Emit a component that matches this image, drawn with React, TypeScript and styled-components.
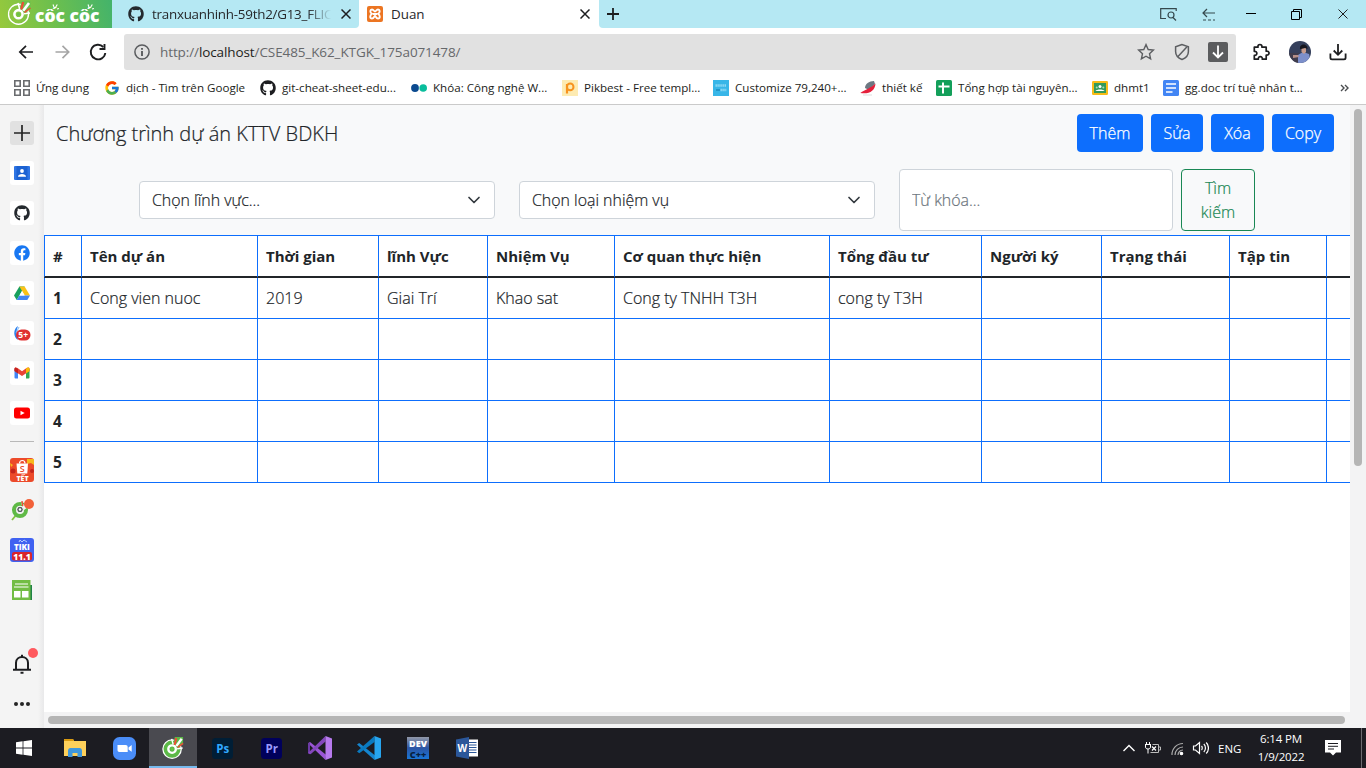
import React from "react";
import styled, { createGlobalStyle } from "styled-components";
import { FaGithub, FaFacebook } from "react-icons/fa";
import { FcGoogle } from "react-icons/fc";

const ui = `"Open Sans", "Noto Sans", sans-serif`;

const Global = createGlobalStyle`
  * { box-sizing: border-box; }
  html, body { margin: 0; overflow: hidden; }
  body { font-family: ${ui}; color: #212529; }
  svg { display: block; flex: none; }
  button, input { font-family: inherit; }
`;

const Screen = styled.div`
  width: 1366px;
  height: 768px;
  display: flex;
  flex-direction: column;
  overflow: hidden;
  background: #fff;
`;

/* ---------- tab strip ---------- */
const TabStrip = styled.div`
  flex: none;
  height: 28px;
  display: flex;
  background: #fff;
`;
const Brand = styled.div`
  width: 112px;
  background: linear-gradient(75deg, #97c93c 0%, #6cbf4e 50%, #43b36b 100%);
`;
const Tab = styled.div<{ $active?: boolean; $width: number }>`
  width: ${(p) => p.$width}px;
  display: flex;
  align-items: center;
  padding: 0 ${(p) => (p.$active ? 9 : 8)}px 0 ${(p) => (p.$active ? 8 : 16)}px;
  gap: 8px;
  background: ${(p) => (p.$active ? "#fff" : "#b5e8f3")};
  border-bottom-right-radius: ${(p) => (p.$active ? 0 : 4)}px;
`;
const TabTitle = styled.span<{ $fade?: boolean }>`
  flex: 1;
  min-width: 0;
  white-space: nowrap;
  font-size: 13.4px;
  line-height: 20px;
  color: #26282b;
  letter-spacing: ${(p) => (p.$fade ? -0.25 : 0)}px;
  mask-image: ${(p) => (p.$fade ? "linear-gradient(90deg, #000 86%, transparent 99%)" : "none")};
`;
const StripRest = styled.div`
  flex: 1;
  display: flex;
  align-items: center;
  padding: 0 18px 0 8px;
  background: #b5e8f3;
  border-bottom-left-radius: 4px;
`;
const WindowTools = styled.div`
  margin-left: auto;
  display: flex;
  align-items: center;
`;
const ToolSlot = styled.div<{ $width: number }>`
  width: ${(p) => p.$width}px;
  display: flex;
  justify-content: flex-end;
`;

/* ---------- toolbar ---------- */
const Toolbar = styled.div`
  flex: none;
  height: 48px;
  display: flex;
  align-items: center;
  padding: 0 0 0 16px;
`;
const NavButtons = styled.div`
  flex: none;
  width: 108px;
  display: flex;
  gap: 16px;
`;
const AddressBar = styled.div`
  flex: none;
  width: 1112px;
  height: 36px;
  display: flex;
  align-items: center;
  padding: 0 8px 0 10px;
  background: #e1e1e1;
  border-radius: 3px;
`;
const Url = styled.span`
  margin-left: 10px;
  flex: 1;
  font-size: 13.5px;
  letter-spacing: -0.1px;
  color: #66686b;
  b { font-weight: 400; color: #1d1e20; }
`;
const BarIcons = styled.div`
  display: flex;
  align-items: center;
  gap: 17.500px;
`;
const ToolbarEnd = styled.div`
  display: flex;
  align-items: center;
  gap: 17px;
  margin-left: 16px;
`;

/* ---------- bookmarks ---------- */
const Bookmarks = styled.div`
  flex: none;
  height: 29px;
  display: flex;
  align-items: center;
  padding: 0 0 5px 14px;
  border-bottom: 1px solid #cacaca;
`;
const Bookmark = styled.div<{ $width: number }>`
  width: ${(p) => p.$width}px;
  flex: none;
  display: flex;
  align-items: center;
  gap: 6px;
  font-size: 11.6px;
  line-height: 18px;
  white-space: nowrap;
  color: #1c1d20;
`;

/* ---------- body ---------- */
const Body = styled.div`
  flex: none;
  height: 623px;
  display: flex;
`;
const Sidebar = styled.div`
  width: 44px;
  flex: none;
  display: flex;
  flex-direction: column;
  align-items: center;
  padding-top: 16px;
  background: linear-gradient(90deg, #f4f4f4 0 38px, #e9e9ea 44px);
`;
const SideTile = styled.div<{ $bg?: string }>`
  position: relative;
  width: 24px;
  height: 24px;
  margin-bottom: 16px;
  flex: none;
  display: flex;
  align-items: center;
  justify-content: center;
  border-radius: 3px;
  background: ${(p) => p.$bg ?? "#fff"};
`;
const SideRule = styled.div`
  width: 24px;
  height: 1px;
  flex: none;
  margin-bottom: 16px;
  background: #b8b8b8;
`;
const SideFoot = styled.div`
  flex: 1;
  display: flex;
  flex-direction: column;
  align-items: center;
  padding-top: 34px;
`;
const Dot = styled.i<{ $color: string; $right: number; $top: number }>`
  position: absolute;
  width: 10px;
  height: 10px;
  top: ${(p) => p.$top}px;
  right: ${(p) => p.$right}px;
  border-radius: 50%;
  background: ${(p) => p.$color};
`;

const Viewport = styled.div`
  width: 1306px;
  flex: none;
  height: 607px;
  overflow: hidden;
  background: #fff;
  font-weight: 300;
  -webkit-text-stroke: 0.22px currentColor;
`;
const PageArea = styled.div`
  flex: 1;
  display: flex;
  flex-direction: column;
  background: #f3f3f4;
`;
const PageRow = styled.div`
  display: flex;
`;
const VTrack = styled.div`
  flex: 1;
  padding: 4px 0 0 4px;
`;
const VThumb = styled.div`
  width: 8px;
  height: 357px;
  border-radius: 4px;
  background: #b5b5b5;
`;
const HTrack = styled.div`
  height: 16px;
  padding: 4px;
`;
const HThumb = styled.div`
  width: 1297px;
  height: 8px;
  border-radius: 4px;
  background: #b5b5b5;
`;

const NavBar = styled.div`
  height: 58px;
  display: flex;
  align-items: center;
  padding: 0 16px 2px 12px;
  background: #f8f9fa;
`;
const Title = styled.h1`
  margin: 0;
  padding-top: 2px;
  flex: 1;
  font-size: 20px;
  font-weight: 300;
  line-height: 30px;
`;
const Actions = styled.div`
  display: flex;
  gap: 8px;
`;
const Primary = styled.button<{ $width: number }>`
  width: ${(p) => p.$width}px;
  height: 38px;
  padding: 0;
  border: 0;
  border-radius: 4px;
  background: #0d6efd;
  color: #fff;
  font-size: 16px;
  font-weight: 300;
  -webkit-text-stroke: 0.25px currentColor;
`;
const SearchBar = styled.form`
  height: 72px;
  display: flex;
  align-items: center;
  padding: 4px 0 2px 95px;
  background: #f8f9fa;
`;
const Select = styled.div`
  width: 356px;
  height: 38px;
  margin-right: 24px;
  padding: 0 12px;
  display: flex;
  align-items: center;
  justify-content: space-between;
  border: 1px solid #ced4da;
  border-radius: 4px;
  background: #fff;
  font-size: 15.9px;
`;
const Keyword = styled.input`
  width: 274px;
  height: 62px;
  margin-right: 8px;
  padding: 0 12px;
  border: 1px solid #ced4da;
  border-radius: 4px;
  font-size: 15.9px;
  font-weight: 300;
  -webkit-text-stroke: 0.22px currentColor;
  &::placeholder { color: #6c757d; opacity: 1; }
`;
const SearchButton = styled.button`
  width: 74px;
  height: 62px;
  padding: 0 12px;
  border: 1px solid #198754;
  border-radius: 4px;
  background: transparent;
  color: #198754;
  font-size: 16px;
  font-weight: 300;
  -webkit-text-stroke: 0.22px currentColor;
  line-height: 24px;
`;

const Table = styled.table`
  width: 1406px;
  table-layout: fixed;
  border-collapse: separate;
  border-spacing: 0;
  border-top: 1px solid #0d6efd;
  font-size: 16px;
  line-height: 24px;
`;
const Cell = styled.td`
  height: 41px;
  padding: 0 8px;
  border-left: 1px solid #0d6efd;
  border-bottom: 1px solid #0d6efd;
  text-align: left;
  font-weight: 300;
  white-space: nowrap;
`;
const HeadCell = styled(Cell)`
  height: 42px;
  border-bottom: 2px solid #212529;
  font-weight: 700;
  font-size: 15px;
  -webkit-text-stroke: 0;
`;
const IndexCell = styled(Cell)`
  font-weight: 700;
  font-size: 15.6px;
  -webkit-text-stroke: 0;
`;

/* ---------- taskbar ---------- */
const Taskbar = styled.div`
  flex: none;
  height: 40px;
  display: flex;
  background: #1c1c22;
  color: #fff;
`;
const TaskItem = styled.div<{ $active?: boolean; $start?: boolean }>`
  width: 48px;
  margin-right: ${(p) => (p.$start ? 3 : 1)}px;
  display: flex;
  align-items: center;
  justify-content: center;
  background: ${(p) => (p.$active ? "#4a4a50" : "transparent")};
  box-shadow: ${(p) => (p.$active ? "inset 0 -2px #76b9ed" : "none")};
`;
const Tray = styled.div`
  margin-left: auto;
  display: flex;
  align-items: center;
  font-size: 11.5px;
`;
const Lang = styled.span`
  width: 40px;
  margin-left: 9px;
`;
const Clock = styled.div`
  width: 46px;
  margin-right: 21px;
  line-height: 18px;
  white-space: nowrap;
  display: flex;
  flex-direction: column;
  align-items: center;
  letter-spacing: -0.15px;
`;
const Peek = styled.div`
  width: 5px;
  height: 40px;
  margin-left: 20px;
  border-left: 1px solid #6b6b70;
`;

/* ---------- drawings ---------- */
const CocMark = ({ size, white }: { size: number; white?: boolean }) => (
  <svg width={size} height={size} viewBox="0 0 24 24" fill="none">
    <circle cx="11" cy="13.2" r="10" fill={white ? "none" : "#5cb947"} stroke="#fff" strokeWidth="1.4" />
    <path d="M12 9 14 0h9v8l-8 4z" fill={white ? "#6cbf4e" : "#5cb947"} />
    <circle cx="11" cy="13.2" r="4.1" stroke="#fff" strokeWidth="2.6" />
    <circle cx="11" cy="13.2" r="1.5" fill="#6abf4a" />
    <path d="m10.500 2 1.700 6M22.500 12l-6 .8" stroke="#fff" strokeWidth="1.6" />
    <path d="m15.600 1-1.800 7.600" stroke="#ef4d36" strokeWidth="2.2" />
    <path d="m21.500 2-5.800 7.800" stroke="#fff" strokeWidth="2.6" />
    <path d="m23 7-6 4.300" stroke="#ef4d36" strokeWidth="1.5" />
  </svg>
);

const BrandArt = () => (
  <svg width="112" height="28" viewBox="0 0 112 28" fill="none">
    <g transform="translate(7.500 1)"><CocMark size={24} white /></g>
    <text x="35" y="21.500" fontSize="18" fontWeight="800" fill="#fff" textLength="64.500" lengthAdjust="spacingAndGlyphs">cốc cốc</text>
    <path d="m53 4.500 1 2.500M57.300 4.500 55.500 7.500M59 8.500l-2 .5M88 4.500l1 2.500M92.300 4.500 90.500 7.500M94 8.500l-2 .5" stroke="#fff" strokeWidth="1.100" />
  </svg>
);

const Cross = ({ s = 10, w = 1.5 }: { s?: number; w?: number }) => (
  <svg width={s} height={s} viewBox="0 0 10 10" stroke="#1d1e20" strokeWidth={w}><path d="m.5.5 9 9m0-9-9 9" /></svg>
);

const Xampp = () => (
  <svg width="16" height="16" viewBox="0 0 16 16">
    <rect width="16" height="16" rx="2" fill="#ec7522" />
    <path d="M5 3.500c-2 0-2.500 3 0 4.300-2.500 1.500-2.200 4.700 0 4.700 2 0 2.300-2.600 3-2.600s1 2.600 3 2.600c2.200 0 2.500-3.200 0-4.700 2.500-1.300 2-4.300 0-4.300-1.800 0-2 2-3 2s-1.200-2-3-2zM6 8h4" fill="none" stroke="#fff" strokeWidth="1.9" />
  </svg>
);

const stroke = { fill: "none", stroke: "#1d1e20", strokeWidth: 1.7 } as const;

const Back = ({ dim }: { dim?: boolean }) => (
  <svg width="20" height="20" viewBox="0 0 20 20" {...stroke} stroke={dim ? "#a5a5a5" : "#1d1e20"}>
    {dim ? <path d="M3.500 10H17M10.500 3.800 16.700 10l-6.200 6.200" /> : <path d="M17 10H4M10 3.800 3.800 10l6.200 6.200" />}
  </svg>
);
const Reload = () => (
  <svg width="20" height="20" viewBox="0 0 20 20" {...stroke} strokeWidth="1.9">
    <path d="M15.300 5A7.300 7.300 0 1 0 17.300 11" /><path d="M16.500 2v5h-5" />
  </svg>
);
const Info = () => (
  <svg width="16" height="16" viewBox="0 0 16 16" fill="none" stroke="#5a5c5f" strokeWidth="1.5">
    <circle cx="8" cy="8" r="7.100" /><path d="M8 7v5M8 4v1.800" strokeWidth="1.900" />
  </svg>
);
const Star = () => (
  <svg width="18" height="18" viewBox="0 0 18 18" fill="none" stroke="#5d5f62" strokeWidth="1.400">
    <path d="m9 1.600 2.200 4.900 5.200.6-3.900 3.600 1.100 5.200L9 13.200l-4.600 2.700 1.100-5.200L1.600 7.100l5.200-.6z" />
  </svg>
);
const Shield = () => (
  <svg width="18" height="18" viewBox="0 0 18 18" fill="none" stroke="#5d5f62" strokeWidth="1.500">
    <path d="M9 1.500 2.600 3.700v4.800c0 3.800 2.900 6.700 6.400 8 3.500-1.300 6.400-4.200 6.400-8V3.700zM13.800 4 5 13.500" />
  </svg>
);
const SaveBox = () => (
  <svg width="20" height="20" viewBox="0 0 20 20"><rect width="20" height="20" rx="2" fill="#5b5c5e" /><path d="M10 3.500v12M5 10.500l5 5 5-5" fill="none" stroke="#fff" strokeWidth="1.800" /></svg>
);
const Puzzle = () => (
  <svg width="20" height="20" viewBox="0 0 20 20" {...stroke} strokeLinejoin="round">
    <path d="M2.300 5.200H6c-.8-3.600 4.600-3.600 3.900 0h4.300v4c3.800-.8 3.800 4.500 0 3.900v4.100h-3.900c.6-3.500-4.600-3.500-3.900 0H2.300v-3.800c3.400.4 3.400-4.600 0-4z" />
  </svg>
);
const Avatar = () => (
  <svg width="22" height="22" viewBox="0 0 22 22">
    <defs><clipPath id="av"><circle cx="11" cy="11" r="11" /></clipPath></defs>
    <g clipPath="url(#av)">
      <rect width="22" height="22" fill="#35405c" /><path d="M0 12h10v10H0z" fill="#3f3c4c" />
      <path d="m9 14 5-3 6 2 2 9H9z" fill="#7c8fcb" /><path d="M12.500 7h4.500v4l-2 2-2.500-2z" fill="#c79b8c" />
      <path d="M11 8c-1-6 8-6 7.500 0l-2.500-1-4 1z" fill="#17171f" /><path d="M4 14h5l1 2-6 1z" fill="#b69089" />
    </g>
  </svg>
);
const Download = () => (
  <svg width="20" height="20" viewBox="0 0 20 20" {...stroke} strokeWidth="1.800">
    <path d="M10 2v10.500M5.700 8.500l4.300 4.300 4.300-4.300M2.400 11.500v4.200c0 1 .6 1.600 1.600 1.600h12c1 0 1.600-.6 1.600-1.600v-4.200" />
  </svg>
);

const Svg16 = ({ children }: { children: React.ReactNode }) => (
  <svg width="16" height="16" viewBox="0 0 16 16">{children}</svg>
);
const GridIcon = () => <Svg16><path d="M.8.800h5.400v5.400H.8zM9.800.8h5.400v5.400H9.800zM.8 9.800h5.400v5.400H.8zM9.800 9.800h5.400v5.400H9.800z" fill="none" stroke="#6a6c6f" strokeWidth="1.600" /></Svg16>;
const DotsPair = () => <Svg16><circle cx="4" cy="8" r="3.900" fill="#0b4a8f" /><circle cx="12.200" cy="8" r="3.800" fill="#09bd9c" /></Svg16>;
const Pik = () => <Svg16><rect width="16" height="16" fill="#fdebb2" /><path d="M5 13.500V4" stroke="#f7931e" strokeWidth="2.200" /><circle cx="8.200" cy="6.900" r="3.300" fill="none" stroke="#f7931e" strokeWidth="2" /></Svg16>;
const Poster = () => <Svg16><rect width="16" height="16" fill="#38b6e8" /><path d="M2.500 5.500h10.500" stroke="#8fd9f3" strokeWidth="2.400" strokeDasharray="1.400 .5" /><path d="M7.500 10h6" stroke="#8fd9f3" strokeWidth="2.400" strokeDasharray="1.400 .5" /><path d="M3 10h4" stroke="#2196c9" strokeWidth="2" /></Svg16>;
const Wing = () => <Svg16><path d="M5 8c0-4 4-7 9-7l1 3-6 6z" fill="#6d7883" /><path d="M.3 13C5 9.500 11 8 15.500 3.500 15 11 9 14.500.3 13z" fill="#e5203b" /><path d="M3 15h9" stroke="#ddd" /></Svg16>;
const Sheets = () => <Svg16><rect width="16" height="16" rx="1.500" fill="#139f5a" /><path d="M2.500 6.500h11M7 2.500v11" stroke="#fff" strokeWidth="2" /></Svg16>;
const Classroom = () => <Svg16><rect y="1" width="16" height="14" rx="1.200" fill="#f7bb16" /><rect x="2" y="3" width="12" height="10" fill="#33995a" /><circle cx="8" cy="6.500" r="1.500" fill="#fff" /><circle cx="4.700" cy="7.500" r="1" fill="#a9d8b8" /><circle cx="11.300" cy="7.500" r="1" fill="#a9d8b8" /><path d="M3.500 11c1-2 8-2 9 0z" fill="#fff" /></Svg16>;
const Docs = () => <Svg16><rect width="16" height="16" rx="1.500" fill="#4285f4" /><path d="M3 4h10M3 8h10M3 12h6.500" stroke="#fff" strokeWidth="1.700" /></Svg16>;

const Contact = () => <Svg16><rect y="1" width="16" height="14" rx="1" fill="#2f75e4" /><rect x="2.500" y="1" width="11" height="14" fill="#1c62d2" /><circle cx="8" cy="6" r="1.900" fill="#fff" /><path d="M4 11.700c0-3.600 8-3.600 8 0z" fill="#fff" /></Svg16>;
const Drive = () => <Svg16><path d="M5.400 1.500h5.200L5.300 10.700 2.700 15 0 10.600z" fill="#18a05e" /><path d="M5.400 1.500h5.200l5.400 9.100h-5.200z" fill="#fbc116" /><path d="M5.300 10.600H16L13.300 15H2.700z" fill="#4285f4" /><path d="M8 6.100 5.400 10.600h5.200z" fill="#fff" /></Svg16>;
const Gmail = () => <Svg16><path d="M.5 3.500 4 6v7.500H1.500a1 1 0 0 1-1-1z" fill="#4285f4" /><path d="M15.500 3.500 12 6v7.500h2.500a1 1 0 0 0 1-1z" fill="#34a853" /><path d="M.5 6V4c0-2 2-1.800 3-1L8 6.200 12.500 3c1-.8 3-1 3 1v2L8 11z" fill="#ea4335" /><path d="M12.500 3c1-.8 3-1 3 1v2L12 8.400V3.400z" fill="#fbbc04" /><path d="M.5 6V4c0-1 .4-1.500 1.200-1.600L4 4v4.400z" fill="#c5221f" /></Svg16>;
const Youtube = () => <Svg16><rect y="2.500" width="16" height="11" rx="2.500" fill="#f00" /><path d="m6.500 5.700 4.200 2.300-4.200 2.300z" fill="#fff" /></Svg16>;
const CBadge = () => (
  <svg width="18" height="18" viewBox="0 0 18 18">
    <path d="M5 2C0 5 0 13 5 16c-2-5-2-9 0-14z" fill="#2d82ee" />
    <path d="M6 3 3 9" stroke="#87b9f4" />
    <rect x="3" y="5.500" width="14.500" height="11" rx="5.500" fill="#df3030" />
    <text x="10.200" y="14" textAnchor="middle" fontSize="8.500" fontWeight="700" fill="#fff">5+</text>
  </svg>
);
const Shopee = () => (
  <svg width="24" height="24" viewBox="0 0 24 24">
    <rect width="24" height="24" rx="3" fill="#ec4a2a" />
    <path d="M17 1h7v6l-3-2-4 1zM0 5l3 2-2 2z" fill="#f7b91c" /><circle cx="3" cy="13" r="2.500" fill="#c3241c" /><circle cx="22" cy="13" r="2" fill="#c3241c" />
    <path d="M6.500 5.500h11.500l-.7 10h-10z" fill="#fff" /><path d="M9.500 5.500c0-4 5.500-4 5.500 0" fill="none" stroke="#fff" strokeWidth="1.200" />
    <text x="12.300" y="13.800" textAnchor="middle" fontSize="9" fontWeight="600" fill="#ec4a2a">S</text>
    <text x="12.500" y="22.600" textAnchor="middle" fontSize="7" fontWeight="800" fill="#fff">TẾT</text>
  </svg>
);
const CocSearch = () => (
  <svg width="24" height="24" viewBox="0 0 24 24" fill="none">
    <path d="m2 22 5-6" stroke="#82c341" strokeWidth="1.800" />
    <circle cx="10" cy="12" r="6" stroke="#5fb946" strokeWidth="4" />
    <path d="m11 5 7 4-4 3z" fill="#f3f3f3" /><circle cx="10" cy="11.500" r="3.300" fill="#5b5f63" stroke="#fff" /><circle cx="10" cy="11.500" r="1.200" fill="#fff" />
    <path d="m12 3 .7 5" stroke="#ef4d36" strokeWidth="1.400" />
  </svg>
);
const Tiki = () => (
  <svg width="24" height="24" viewBox="0 0 24 24">
    <rect width="24" height="24" rx="3" fill="#4062f1" />
    <path d="m9 4 1-2 2 2 2-2 3 2" stroke="#b4cbff" fill="none" />
    <text x="12" y="12.300" textAnchor="middle" fontSize="8" fontWeight="800" fill="#fff">TIKI</text>
    <rect x="2" y="14" width="20" height="8.500" rx="2" fill="#d8232b" />
    <text x="12" y="21.700" textAnchor="middle" fontSize="8.500" fontWeight="800" fill="#fff">11.1</text>
  </svg>
);
const News = () => (
  <svg width="24" height="24" viewBox="0 0 24 24"><path d="M19 7h3v15H6z" fill="#218348" /><rect x="2" y="2" width="18.500" height="20" fill="#72bd44" /><path d="M5 6h13M4 9h14.500" stroke="#fff" strokeWidth="1.200" /><path d="M4 13h6.500v6.500H4zM12 13h6.500v6.500H12z" fill="#fff" /></svg>
);
const Bell = () => (
  <svg width="20" height="20" viewBox="0 0 20 20" {...stroke} strokeWidth="2">
    <path d="M1 15.800h18M4 15.500V8.800C4 1.200 16 1.200 16 8.800v6.700M8.500 18.700h3M10 .8V3" />
  </svg>
);

/* taskbar drawings */
const WinLogo = () => <svg width="16" height="16" viewBox="0 0 16 16" fill="#fff"><path d="m0 2.200 6.600-.9v6.200H0zM7.400 1.200 16 0v7.500H7.400zM0 8.400h6.600v6.300L0 13.800zM7.400 8.400H16V16l-8.600-1.200z" /></svg>;
const Explorer = () => <svg width="22" height="20" viewBox="0 0 22 20"><path d="M0 1h9l1 2h12v15H0z" fill="#fdd05b" /><path d="M0 1h9l1 2H0z" fill="#d99a11" /><path d="M4 19v-6c0-2 1-3 2.500-3h9c1.500 0 2.500 1 2.500 3v6h-4.500v-4h-5v4z" fill="#3f97dc" /></svg>;
const ZoomApp = () => <svg width="23" height="23" viewBox="0 0 23 23"><rect width="23" height="23" rx="6.500" fill="#4a8df8" /><path d="M4.500 8h8c1.500 0 2.200.8 2.200 2.200V15H6.500c-1.300 0-2-.8-2-2zM15.500 10.500l3.200-2.400v6.700l-3.200-2.300z" fill="#fff" /></svg>;
const Adobe = ({ bg, fg, t }: { bg: string; fg: string; t: string }) => <svg width="21" height="21" viewBox="0 0 21 21"><rect width="21" height="21" rx="3.500" fill={bg} /><text x="10.700" y="14.800" textAnchor="middle" fontSize="11.500" fontWeight="700" fill={fg}>{t}</text></svg>;
const VStudio = () => <svg width="24" height="24" viewBox="0 0 24 24"><path d="M0 7.200 2 6l16 12.800L17.500 24z" fill="#9a55d6" /><path d="m0 7.200 2-1v12l-2-1z" fill="#6c3aa5" /><path d="M0 17 17.500 0v5.500L2.500 18.200z" fill="#8447bd" /><path d="m17.500 0 6.500 2.500v19L17.500 24z" fill="#b77aee" /></svg>;
const VSCode = () => <svg width="24" height="24" viewBox="0 0 24 24"><path d="M0 8.600 2.200 7l16 12.500L17.500 24z" fill="#1585cf" /><path d="M0 15.500 17.500 0v6L2.300 17.200z" fill="#0a7ac0" /><path d="m17.500 0 6.500 2.500v19L17.500 24z" fill="#27a5ef" /></svg>;
const DevCpp = () => (
  <svg width="22" height="22" viewBox="0 0 22 22">
    <defs><linearGradient id="dv" x2="0" y2="1"><stop stopColor="#9298a8" /><stop offset=".5" stopColor="#2c55a4" /><stop offset="1" stopColor="#1976d8" /></linearGradient></defs>
    <rect width="22" height="22" fill="url(#dv)" />
    <text x="11" y="9.500" textAnchor="middle" fontSize="9" fontWeight="800" fill="#fff">DEV</text>
    <text x="11" y="20.500" textAnchor="middle" fontSize="9" fontWeight="800" fill="#08203f">C++</text>
  </svg>
);
const Word = () => <svg width="22" height="22" viewBox="0 0 22 22"><path d="M12 2.500h10v17H12z" fill="#fff" /><path d="M13 5.500h7.500M13 8h7.500M13 10.500h7.500M13 13h7.500M13 15.500h7.500" stroke="#2b579a" /><path d="M0 2.500 13 0v22L0 19.500z" fill="#2b579a" /><text x="6.300" y="14.500" textAnchor="middle" fontSize="10" fontWeight="700" fill="#fff">W</text></svg>;

const TrayIcons = () => (
  <svg width="88" height="20" viewBox="0 0 88 20" fill="none" stroke="#fff" strokeWidth="1.200">
    <path d="m2.500 13 5.500-5.500 5.500 5.500" strokeWidth="1.400" />
    <path d="M25.500 4v2.500M28.500 4v2.500M24 6.500h6M24.500 7v2c0 1.300 1 2 2.500 2s2.500-.7 2.500-2V7M27 11v4.500" strokeWidth="1" />
    <path d="M31.500 6.500h6v8h-8" stroke="#bbb" strokeWidth="1" /><path d="M38 9h1.500v3H38" stroke="#bbb" strokeWidth="1" />
    <path d="m31 8.500 4 4m0-4-4 4" />
    <g stroke="#aaa"><path d="M51 17A11 11 0 0 1 62 5.500M54 17a8 8 0 0 1 8-8M57 17a5 5 0 0 1 5-5" /><circle cx="60.500" cy="15.500" r="1.200" fill="#fff" stroke="#fff" /></g>
    <path d="M72.500 8h2L78.500 4.500v11l-4-3.500h-2zM80.500 8c1 1 1 3 0 4M82.800 6c2.200 2 2.200 6 0 8M85.200 4.500c3 3 3 8 0 11" />
  </svg>
);
const Notice = () => <svg width="16" height="16" viewBox="0 0 16 16"><path d="M0 0h16v12.500h-5L8 15.500l-3-3H0z" fill="#fff" /><path d="M3 3.500h10M3 6.300h10M3 9h6" stroke="#1c1c22" /></svg>;

const bookmarks: { w: number; icon: React.ReactNode; text: string }[] = [
  { w: 90, icon: <GridIcon />, text: "Ứng dụng" },
  { w: 156, icon: <FcGoogle size={16} />, text: "dịch - Tìm trên Google" },
  { w: 151, icon: <FaGithub size={16} />, text: "git-cheat-sheet-edu..." },
  { w: 151, icon: <DotsPair />, text: "Khóa: Công nghệ W..." },
  { w: 151, icon: <Pik />, text: "Pikbest - Free templ..." },
  { w: 147, icon: <Poster />, text: "Customize 79,240+..." },
  { w: 76, icon: <Wing />, text: "thiết kế" },
  { w: 156, icon: <Sheets />, text: "Tổng hợp tài nguyên..." },
  { w: 71, icon: <Classroom />, text: "dhmt1" },
  { w: 177, icon: <Docs />, text: "gg.doc trí tuệ nhân t..." },
];

const columns: [string, number][] = [
  ["#", 37], ["Tên dự án", 176], ["Thời gian", 121], ["lĩnh Vực", 109], ["Nhiệm Vụ", 127],
  ["Cơ quan thực hiện", 215], ["Tổng đầu tư", 152], ["Người ký", 120], ["Trạng thái", 128],
  ["Tập tin", 97], ["", 124],
];
const first = ["Cong vien nuoc", "2019", "Giai Trí", "Khao sat", "Cong ty TNHH T3H", "cong ty T3H", "", "", "", ""];
const rows = [first, ...Array.from({ length: 4 }, () => Array<string>(10).fill(""))];

const Chevron = () => <svg width="16" height="12" viewBox="0 0 16 12" fill="none" stroke="#343a40" strokeWidth="1.700" strokeLinecap="round" strokeLinejoin="round"><path d="m3 3.500 5 5 5-5" /></svg>;

export default function App() {
  return (
    <Screen>
      <Global />
      <TabStrip>
        <Brand><BrandArt /></Brand>
        <Tab $width={247}>
          <FaGithub size={16} color="#24292e" />
          <TabTitle $fade>tranxuanhinh-59th2/G13_FLIC</TabTitle>
          <Cross />
        </Tab>
        <Tab $active $width={240}>
          <Xampp />
          <TabTitle>Duan</TabTitle>
          <Cross />
        </Tab>
        <StripRest>
          <svg width="12" height="12" viewBox="0 0 12 12" stroke="#1d1e20" strokeWidth="1.800"><path d="M6 0v12M0 6h12" /></svg>
          <WindowTools>
            <svg width="17" height="13" viewBox="0 0 17 13" fill="none" stroke="#35484d" strokeWidth="1.200"><path d="M6 10.500H.700V.700h15.500V3" /><circle cx="11" cy="7" r="3" /><path d="m13 9.500 3 3" /></svg>
            <ToolSlot $width={38}><svg width="13" height="13" viewBox="0 0 13 13" fill="none" stroke="#35484d" strokeWidth="1.200"><path d="M13 5H1M5 1 1 5l4 4" /><path d="M1 12h12" strokeDasharray="3 2" /></svg></ToolSlot>
            <ToolSlot $width={41}><svg width="10" height="10" viewBox="0 0 10 10" stroke="#000"><path d="M0 4.500h10" /></svg></ToolSlot>
            <ToolSlot $width={46}><svg width="11" height="11" viewBox="0 0 11 11" fill="none" stroke="#000"><path d="M.500 2.500h8v8h-8zM2.500 2V.500h8v8H9" /></svg></ToolSlot>
            <ToolSlot $width={46}><Cross s={10} w={1} /></ToolSlot>
          </WindowTools>
        </StripRest>
      </TabStrip>

      <Toolbar>
        <NavButtons><Back /><Back dim /><Reload /></NavButtons>
        <AddressBar>
          <Info />
          <Url>http://<b>localhost</b>/CSE485_K62_KTGK_175a071478/</Url>
          <BarIcons><Star /><Shield /><SaveBox /></BarIcons>
        </AddressBar>
        <ToolbarEnd><Puzzle /><Avatar /><Download /></ToolbarEnd>
      </Toolbar>

      <Bookmarks>
        {bookmarks.map((b) => (
          <Bookmark key={b.text} $width={b.w}>{b.icon}<span>{b.text}</span></Bookmark>
        ))}
        <svg width="9" height="8" viewBox="0 0 9 8" fill="none" stroke="#4a4c4f" strokeWidth="1.400"><path d="m1 1 3 3-3 3M5 1l3 3-3 3" /></svg>
      </Bookmarks>

      <Body>
        <Sidebar>
          <SideTile $bg="#e1e1e1"><svg width="16" height="16" viewBox="0 0 16 16" stroke="#242424" strokeWidth="1.700"><path d="M8 0v16M0 8h16" /></svg></SideTile>
          <SideTile><Contact /></SideTile>
          <SideTile><FaGithub size={16} color="#24292e" /></SideTile>
          <SideTile><FaFacebook size={16} color="#1877f2" /></SideTile>
          <SideTile><Drive /></SideTile>
          <SideTile><CBadge /></SideTile>
          <SideTile><Gmail /></SideTile>
          <SideTile><Youtube /></SideTile>
          <SideRule />
          <SideTile $bg="transparent"><Shopee /></SideTile>
          <SideTile $bg="transparent"><CocSearch /><Dot $color="#f26139" $right={0} $top={1} /></SideTile>
          <SideTile $bg="transparent"><Tiki /></SideTile>
          <SideTile $bg="transparent"><News /></SideTile>
          <SideFoot>
            <SideTile $bg="transparent"><Bell /><Dot $color="#ff5a5f" $right={-4} $top={-4} /></SideTile>
            <SideTile $bg="transparent"><svg width="16" height="4" viewBox="0 0 16 4" fill="#242424"><circle cx="2" cy="2" r="2" /><circle cx="8" cy="2" r="2" /><circle cx="14" cy="2" r="2" /></svg></SideTile>
          </SideFoot>
        </Sidebar>
        <PageArea>
          <PageRow>
            <Viewport>
              <NavBar>
                <Title>Chương trình dự án KTTV BDKH</Title>
                <Actions>
                  <Primary $width={66}>Thêm</Primary>
                  <Primary $width={52}>Sửa</Primary>
                  <Primary $width={53}>Xóa</Primary>
                  <Primary $width={62}>Copy</Primary>
                </Actions>
              </NavBar>
              <SearchBar>
                <Select>Chọn lĩnh vực...<Chevron /></Select>
                <Select>Chọn loại nhiệm vụ<Chevron /></Select>
                <Keyword placeholder="Từ khóa..." />
                <SearchButton type="button">Tìm kiếm</SearchButton>
              </SearchBar>
              <Table>
                <colgroup>{columns.map(([n, w]) => <col key={n} width={w} />)}</colgroup>
                <thead><tr>{columns.map(([n]) => <HeadCell as="th" key={n}>{n}</HeadCell>)}</tr></thead>
                <tbody>
                  {rows.map((r, i) => (
                    <tr key={i}><IndexCell as="th">{i + 1}</IndexCell>{r.map((c, j) => <Cell key={j}>{c}</Cell>)}</tr>
                  ))}
                </tbody>
              </Table>
            </Viewport>
            <VTrack><VThumb /></VTrack>
          </PageRow>
          <HTrack><HThumb /></HTrack>
        </PageArea>
      </Body>

      <Taskbar>
        <TaskItem $start><WinLogo /></TaskItem>
        <TaskItem><Explorer /></TaskItem>
        <TaskItem><ZoomApp /></TaskItem>
        <TaskItem $active><CocMark size={22} /></TaskItem>
        <TaskItem><Adobe bg="#001e36" fg="#31a8ff" t="Ps" /></TaskItem>
        <TaskItem><Adobe bg="#00005b" fg="#9999ff" t="Pr" /></TaskItem>
        <TaskItem><VStudio /></TaskItem>
        <TaskItem><VSCode /></TaskItem>
        <TaskItem><DevCpp /></TaskItem>
        <TaskItem><Word /></TaskItem>
        <Tray>
          <TrayIcons />
          <Lang>ENG</Lang>
          <Clock><span>6:14 PM</span><span>1/9/2022</span></Clock>
          <Notice />
          <Peek />
        </Tray>
      </Taskbar>
    </Screen>
  );
}
